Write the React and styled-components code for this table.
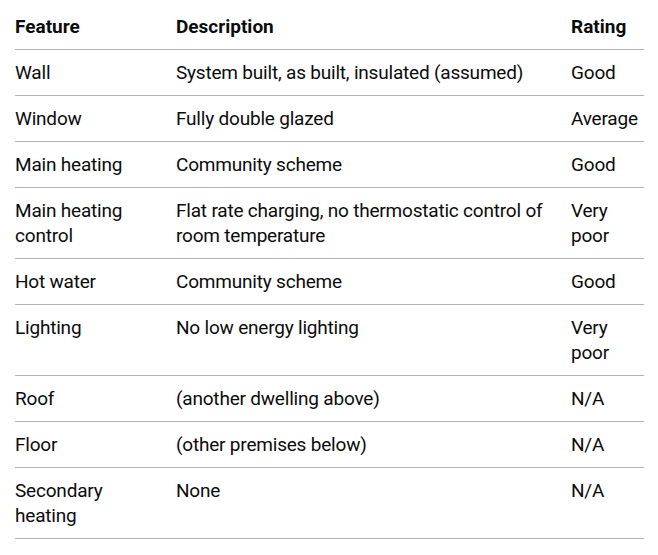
import React from "react";
import styled, { createGlobalStyle } from "styled-components";

const Global = createGlobalStyle`
  html, body { margin: 0; padding: 0; background: #ffffff; }
  body { font-family: Roboto, Arial, sans-serif; color: #0b0c0c; }
`;

const Page = styled.div`
  padding: 4px 14px 0 15px;
`;

const Table = styled.table`
  width: 629px;
  border-collapse: collapse;
  border-spacing: 0;
  table-layout: fixed;
  font-size: 19px;
  line-height: 25px;
  color: #0b0c0c;
`;

const Col = styled.col`
  width: ${(p) => p.$w}px;
`;

const Th = styled.th`
  text-align: left;
  font-weight: 700;
  padding: 10px 20px 10px 0;
  border-bottom: 1px solid #b1b4b6;
  vertical-align: top;
  &:last-child { padding-right: 0; }
`;

const Td = styled.td`
  text-align: left;
  font-weight: 400;
  letter-spacing: -0.2px;
  padding: 10px 20px 10px 0;
  border-bottom: 1px solid #b1b4b6;
  vertical-align: top;
  &:last-child { padding-right: 0; }
`;

const rows = [
  ["Wall", "System built, as built, insulated (assumed)", "Good"],
  ["Window", "Fully double glazed", "Average"],
  ["Main heating", "Community scheme", "Good"],
  ["Main heating control", "Flat rate charging, no thermostatic control of room temperature", "Very poor"],
  ["Hot water", "Community scheme", "Good"],
  ["Lighting", "No low energy lighting", "Very poor"],
  ["Roof", "(another dwelling above)", "N/A"],
  ["Floor", "(other premises below)", "N/A"],
  ["Secondary heating", "None", "N/A"],
];

export default function App() {
  return (
    <Page>
      <Global />
      <Table>
        <colgroup>
          <Col $w={161} />
          <Col $w={395} />
          <Col $w={73} />
        </colgroup>
        <thead>
          <tr>
            <Th>Feature</Th>
            <Th>Description</Th>
            <Th>Rating</Th>
          </tr>
        </thead>
        <tbody>
          {rows.map((r) => (
            <tr key={r[0]}>
              <Td>{r[0]}</Td>
              <Td>{r[1]}</Td>
              <Td>{r[2]}</Td>
            </tr>
          ))}
        </tbody>
      </Table>
    </Page>
  );
}
